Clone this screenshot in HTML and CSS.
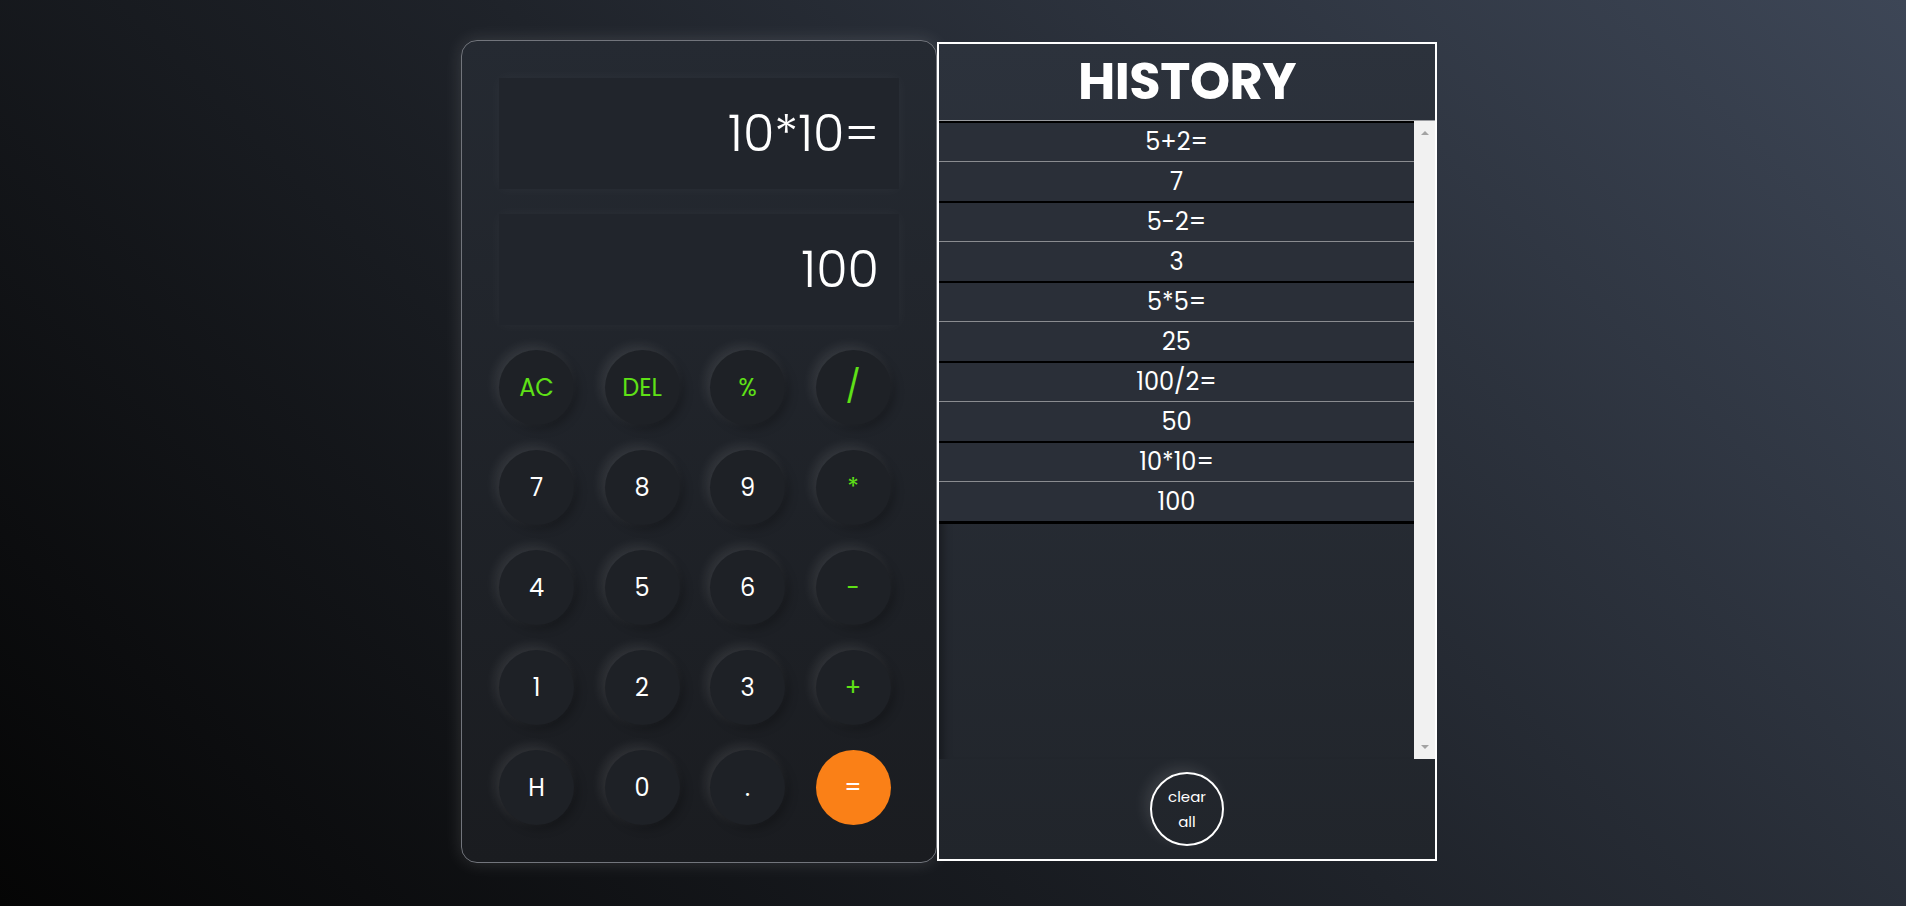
FILE: index.html
```html
<!DOCTYPE html>
<html lang="en">
<head>
<meta charset="utf-8">
<title>Calculator</title>
<link rel="stylesheet" href="styles.css">
</head>
<body>
<main class="app">
  <section class="calc">
    <div class="display">10*10=</div>
    <div class="display">100</div>
    <div class="keys">
      <button class="key op">AC</button>
      <button class="key op">DEL</button>
      <button class="key op">%</button>
      <button class="key op slash">/</button>
      <button class="key">7</button>
      <button class="key">8</button>
      <button class="key">9</button>
      <button class="key op">*</button>
      <button class="key">4</button>
      <button class="key">5</button>
      <button class="key">6</button>
      <button class="key op">-</button>
      <button class="key">1</button>
      <button class="key">2</button>
      <button class="key">3</button>
      <button class="key op">+</button>
      <button class="key">H</button>
      <button class="key">0</button>
      <button class="key">.</button>
      <button class="key equal">=</button>
    </div>
  </section>
  <section class="history">
    <h1 class="history-title">HISTORY</h1>
    <div class="history-body">
      <div class="history-list">
        <div class="entry"><div class="expr">5+2=</div><div class="res">7</div></div>
        <div class="entry"><div class="expr">5-2=</div><div class="res">3</div></div>
        <div class="entry"><div class="expr">5*5=</div><div class="res">25</div></div>
        <div class="entry"><div class="expr">100/2=</div><div class="res">50</div></div>
        <div class="entry last"><div class="expr">10*10=</div><div class="res">100</div></div>
      </div>
      <div class="scrollbar">
        <span class="arrow up"></span>
        <span class="arrow down"></span>
      </div>
    </div>
    <div class="history-foot">
      <button class="clear">clear<br>all</button>
    </div>
  </section>
</main>
</body>
</html>
```
FILE: styles.css
```css
* { box-sizing: border-box; }

html, body { height: 100%; }

body {
  margin: 0;
  font-family: "Poppins", "Open Sans", "Noto Sans", sans-serif;
  color: #fff;
  background: linear-gradient(45deg, #050505 0%, #1f232a 50%, #3d4656 100%);
  display: flex;
  align-items: center;
  justify-content: center;
  overflow: hidden;
}

.app {
  display: flex;
  align-items: center;
  margin-right: 8px;
  margin-bottom: 4px;
}

.calc {
  width: 476px;
  padding: 37px 37px 37px;
  border: 1px solid #72757c;
  border-radius: 16px;
  background: linear-gradient(to bottom, #252a32, #1a1c20);
  box-shadow: 0 0 18px rgba(255, 255, 255, 0.13);
  display: flex;
  flex-direction: column;
  gap: 25px;
}

.display {
  height: 111px;
  background: #21252c;
  box-shadow: 0 0 14px rgba(255, 255, 255, 0.04);
  display: flex;
  align-items: center;
  justify-content: flex-end;
  padding-right: 20px;
  font-size: 51px;
  font-weight: 300;
}

.keys {
  display: grid;
  grid-template-columns: repeat(4, 75px);
  grid-auto-rows: 75px;
  column-gap: 30.5px;
  row-gap: 25px;
}

.key {
  width: 75px;
  height: 75px;
  border: none;
  border-radius: 50%;
  background: #1e2126;
  color: #fff;
  font-family: inherit;
  font-size: 24px;
  padding: 0;
  box-shadow: -4px -4px 12px rgba(255, 255, 255, 0.1), 4px 4px 10px rgba(0, 0, 0, 0.25);
  display: flex;
  align-items: center;
  justify-content: center;
}

.key.op { color: #5fe116; }
.key.slash { font-size: 32px; }

.key.equal {
  background: #fa8017;
  box-shadow: none;
}

.history {
  width: 500px;
  height: 819px;
  border: 2px solid #fff;
  background: linear-gradient(to bottom, #2c323c, #21252b);
  display: flex;
  flex-direction: column;
}

.history-title {
  margin: 0;
  height: 77px;
  border-bottom: 1px solid #9a9ca0;
  display: flex;
  align-items: center;
  justify-content: center;
  font-size: 51px;
  font-weight: 700;
  letter-spacing: -0.5px;
}

.history-body {
  height: 638px;
  display: flex;
  box-shadow: inset 12px 0 10px -8px rgba(0, 0, 0, 0.35);
}

.history-list {
  flex: 1;
  overflow: hidden;
}

.entry {
  border-top: 2px solid #000;
  background: #2a2f38;
}

.entry.last { border-bottom: 3px solid #000; }

.expr, .res {
  display: flex;
  align-items: center;
  justify-content: center;
  font-size: 24px;
}

.expr {
  height: 39px;
  border-bottom: 1px solid #8a8c90;
}

.res { height: 39px; }

.scrollbar {
  width: 21px;
  background: #f1f1f1;
  display: flex;
  flex-direction: column;
  justify-content: space-between;
  align-items: center;
  padding: 10px 0 10px;
}

.arrow {
  width: 0;
  height: 0;
  border-left: 4px solid transparent;
  border-right: 4px solid transparent;
}

.arrow.up { border-bottom: 4px solid #a3a3a3; }
.arrow.down { border-top: 4px solid #a3a3a3; }

.history-foot {
  flex: 1;
  display: flex;
  align-items: center;
  justify-content: center;
}

.clear {
  width: 74px;
  height: 74px;
  border-radius: 50%;
  border: 2px solid #fff;
  background: transparent;
  color: #fff;
  font-family: inherit;
  font-size: 15px;
  line-height: 25px;
  padding: 0;
  box-shadow: -5px -5px 14px rgba(255, 255, 255, 0.1);
}
```
